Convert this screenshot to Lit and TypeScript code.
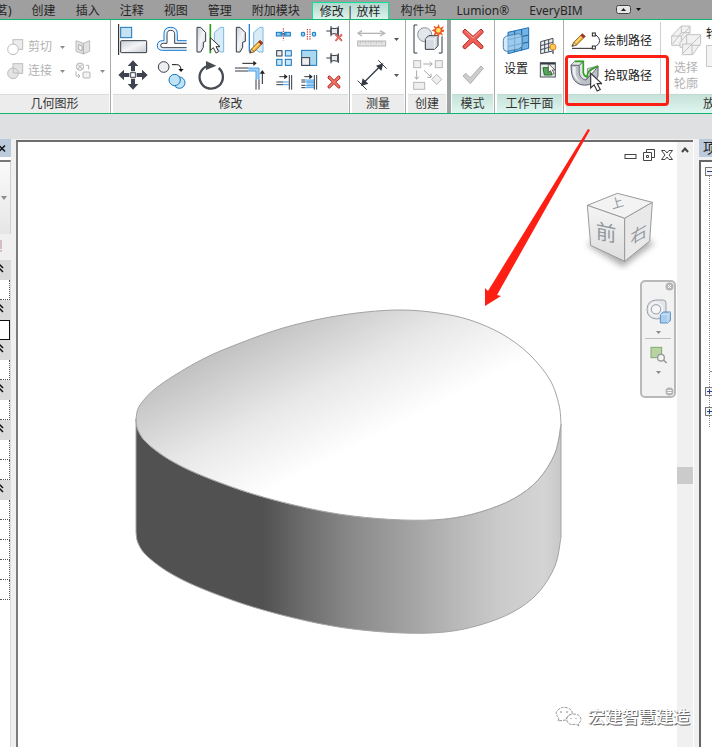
import { LitElement, html, svg, css, nothing, type TemplateResult, type SVGTemplateResult } from "lit";
import { customElement, property } from "lit/decorators.js";
import { classMap } from "lit/directives/class-map.js";

type Pt = [number, number];

/** Smooth curve through a list of points (Catmull-Rom converted to cubic Béziers). */
function curve(points: Pt[], closed = false): string {
  const n = points.length;
  const at = (i: number): Pt =>
    closed ? points[(i + n) % n] : points[Math.max(0, Math.min(n - 1, i))];
  let d = "";
  for (let i = 0; i < (closed ? n : n - 1); i++) {
    const [a, b, c, e] = [at(i - 1), at(i), at(i + 1), at(i + 2)];
    d += `C${b[0] + (c[0] - a[0]) / 6} ${b[1] + (c[1] - a[1]) / 6} ${c[0] - (e[0] - b[0]) / 6} ${c[1] - (e[1] - b[1]) / 6} ${c[0]} ${c[1]}`;
  }
  return d;
}

const RIM_BACK: Pt[] = [
  [136, 419], [140, 405], [160, 385], [203, 359], [243, 342], [283, 328], [325, 318], [366, 312],
  [403, 310], [438, 313], [470, 320], [502, 334], [529, 354], [550, 380], [559, 405], [561, 424],
];
const RIM_FRONT: Pt[] = [
  [561, 424], [555, 453], [538, 480], [513, 499], [480, 512], [445, 519], [403, 520], [353, 516],
  [307, 508], [253, 494], [203, 476], [170, 460], [147, 443], [138, 430], [136, 419],
];
const BASE_FRONT: Pt[] = RIM_FRONT.map(([x, y]) => [x, y + 113] as Pt);

const PENCIL = svg`<path d="M2 40L7 28L33 2L42 10L16 36Z" fill="#f5a623" stroke="#6b4a1c" stroke-width="2"/>
  <path d="M2 40L7 28L16 36Z" fill="#f7e3bd" stroke="#6b4a1c" stroke-width="2"/><path d="M2 40L5 34L8 37Z" fill="#222"/>
  <path d="M27 8L33 2L42 10L36 16Z" fill="#a2342a"/><path d="M12 30L31 11" stroke="#ffe08a" stroke-width="4"/>`;
const CURSOR = svg`<path d="M0 0V38L9 30L17 46L25 42L17 27H29Z" fill="#fff" stroke="#333" stroke-width="3"/>`;
const RED_X = svg`<path d="M6 10L10 6L24 20L38 6L42 10V14L29 25L42 38V41L38 44L24 30L10 44L6 41V38L19 25L6 13Z" fill="#f4796b" stroke="#b3201c" stroke-width="3"/>`;
const PIN = svg`<g fill="#e8eaed" stroke="#333a44" stroke-width="3"><path d="M4 27H17" /><path d="M18 12V43M18 18Q26 22 38 18V37Q26 33 18 37Z"/><path d="M40 13V42"/></g>`;

/** Glyph bodies: [viewBox width, viewBox height, shapes]; three units make one pixel. */
const GLYPHS: Record<string, [number, number, SVGTemplateResult]> = {
  align: [96, 96, svg`<path d="M5 3V96" stroke="#111" stroke-width="3"/><rect x="11" y="13" width="33" height="31" fill="#c5e3f0" stroke="#1476bd" stroke-width="3"/><rect x="11" y="53" width="78" height="36" rx="2" fill="url(#metal)" stroke="#333a44" stroke-width="3"/>`],
  offset: [96, 96, svg`<g fill="none" stroke-width="3"><path d="M92 53H64V32Q64 13 44 13Q24 13 24 32V53H20Q4 53 4 68Q4 82 20 82H92" fill="#eaf3fa" stroke="#1476cf"/><path d="M92 61H56V34Q56 22 44 22Q33 22 33 34V61H22Q14 61 14 68Q14 74 22 74H92" fill="#fff" stroke="#3a424d"/></g>`],
  mirrorPick: [96, 96, svg`<path d="M6 13H17L32 29V55L25 58V73L17 87H6Z" fill="url(#metal)" stroke="#333a44" stroke-width="3"/><path d="M86 13H76L58 29V55L64 60V73L76 87H86Z" fill="#d8ebf7" stroke="#7db8e0" stroke-width="3"/><path d="M46 3V91" stroke="#2f9e1b" stroke-width="5"/><g transform="translate(46 44)">${CURSOR}</g>`],
  mirrorDraw: [96, 96, svg`<path d="M7 13H18L34 29V55L26 58V73L18 87H7Z" fill="url(#metal)" stroke="#333a44" stroke-width="3"/><path d="M87 13H77L59 29V75L75 87H87Z" fill="#d8ebf7" stroke="#7db8e0" stroke-width="3"/><path d="M46 3V86" stroke="#2b83d6" stroke-width="4"/><g transform="translate(45 50)">${PENCIL}</g>`],
  move: [96, 96, svg`<path d="M48 4L64 21H54V37H42V21H32ZM48 92L64 75H54V59H42V75H32ZM4 48L21 32V42H37V54H21V64ZM92 48L75 32V42H59V54H75V64Z" fill="#3d444e"/><rect x="41" y="41" width="14" height="14" fill="#fff" stroke="#3d444e" stroke-width="3"/>`],
  copy: [96, 96, svg`<circle cx="23" cy="24" r="16" fill="#eceef0" stroke="#3a424d" stroke-width="3"/><path d="M48 17H62Q75 17 75 34" fill="none" stroke="#111" stroke-width="3"/><path d="M67 30H83L75 39Z" fill="#111"/><g fill="#bfe2f5" stroke="#1476bd" stroke-width="3"><circle cx="70" cy="71" r="17"/><circle cx="56" cy="63" r="17"/></g>`],
  rotate: [96, 96, svg`<path d="M71 27A35 35 0 1 1 37 21" fill="none" stroke="#474b52" stroke-width="7"/><path d="M33 6V33L64 20Z" fill="#474b52"/>`],
  trim: [96, 96, svg`<path d="M43 27H75V61H66V36H43Z" fill="#9fd0f7"/><g fill="none" stroke-width="3"><path d="M3 27H43M3 36H43M66 61V92M75 61V92" stroke="#333a44"/><path d="M43 27H75V61M43 36H66V61" stroke="#4aa0ea"/><path d="M25 13H60M85 75V42" stroke="#222"/></g><path d="M58 5L68 13L58 21ZM77 44L85 33L93 44Z" fill="#222"/>`],
  split: [54, 54, svg`<rect x="4" y="22" width="17" height="11" fill="#8ed0f5" stroke="#1476bd" stroke-width="3"/><rect x="29" y="22" width="17" height="11" fill="#8ed0f5" stroke="#1476bd" stroke-width="3"/><path d="M14 27H36" stroke="#1476bd" stroke-width="3"/><path d="M25 10V46" stroke="#b3201c" stroke-width="3" stroke-dasharray="4 3"/>`],
  splitGap: [54, 54, svg`<rect x="4" y="22" width="10" height="11" rx="2" fill="#8ed0f5" stroke="#1476bd" stroke-width="3"/><rect x="37" y="22" width="10" height="11" rx="2" fill="#8ed0f5" stroke="#1476bd" stroke-width="3"/><path d="M22 12V45M30 12V45" stroke="#b3201c" stroke-width="3" stroke-dasharray="4 3"/>`],
  unpin: [54, 54, svg`<g transform="translate(0 -9)">${PIN}</g><g transform="translate(28 24) scale(.55)">${RED_X}</g>`],
  pin: [54, 54, PIN],
  array: [54, 54, svg`<g fill="#eceef0" stroke="#333a44" stroke-width="3"><rect x="5" y="5" width="16" height="16"/></g><g fill="#c9e6f7" stroke="#1476bd" stroke-width="3"><rect x="31" y="5" width="18" height="16"/><rect x="5" y="31" width="16" height="18"/><rect x="31" y="31" width="18" height="18"/></g>`],
  scale: [54, 54, svg`<rect x="5" y="4" width="45" height="45" fill="#a9d9ee" stroke="#1476bd" stroke-width="3"/><rect x="5" y="26" width="24" height="23" fill="#eceef0" stroke="#333a44" stroke-width="3"/>`],
  trimOne: [54, 54, svg`<g stroke-width="3"><path d="M4 27H24M4 35H24M43 6V50M50 6V50M13 11H30" stroke="#333a44"/><path d="M24 27H42M24 35H42" stroke="#4aa0ea"/></g><path d="M28 3L38 11L28 19Z" fill="#222"/>`],
  trimMany: [54, 54, svg`<rect x="20" y="22" width="22" height="20" fill="#9fd2f7"/><g stroke-width="3"><path d="M4 21H16M4 27H16M4 37H16M4 44H16M43 6V50M50 6V50M13 11H30" stroke="#333a44"/><path d="M16 21H42M16 27H42M16 37H42M16 44H42" stroke="#4aa0ea"/></g><path d="M28 3L38 11L28 19Z" fill="#222"/>`],
  remove: [54, 54, svg`<g transform="translate(3 2)">${RED_X}</g>`],
  cut: [54, 54, svg`<g fill="#ececec" stroke="#bdbdbd" stroke-width="3"><rect x="21" y="5" width="29" height="29"/><circle cx="21" cy="34" r="16" fill="#fff"/></g>`],
  join: [54, 54, svg`<g fill="#e4e4e4" stroke="#bdbdbd" stroke-width="3"><rect x="21" y="5" width="29" height="29"/><circle cx="21" cy="34" r="16"/><path d="M22 20V33H36" fill="none"/></g>`],
  opening: [54, 54, svg`<path d="M6 8L28 16L47 8V40L28 48L6 40Z" fill="#e2e2e2" stroke="#bdbdbd" stroke-width="3"/><path d="M28 16V48M14 20L24 24V38L14 34Z" fill="#fff" stroke="#aaa" stroke-width="3"/>`],
  paint: [54, 54, svg`<g fill="#f2f2f2" stroke="#b5b5b5" stroke-width="3"><circle cx="18" cy="14" r="11"/><path d="M11 7L25 21M25 7L11 21"/><rect x="27" y="30" width="21" height="18" rx="3"/><path d="M6 28V42H18M12 36L18 42L12 48M36 10H44V22" fill="none"/></g>`],
  measure: [96, 54, svg`<g stroke="#b5b5b5" stroke-width="4" fill="none"><path d="M10 10H80"/><path d="M18 2L6 10L18 18M72 2L86 10L72 18"/></g><rect x="5" y="33" width="84" height="15" fill="#e4e4e4" stroke="#b5b5b5" stroke-width="3"/><path d="M13 33V41M21 33V38M29 33V41M37 33V38M45 33V41M53 33V38M61 33V41M69 33V38M77 33V41" stroke="#aaa" stroke-width="2"/>`],
  dimension: [96, 96, svg`<g stroke="#333a44" stroke-width="4"><path d="M17 77L77 17"/><path d="M5 65L32 92M67 4L92 29" stroke-width="3"/></g><path d="M15 81L20 58L37 74ZM82 13L60 20L76 36Z" fill="#333a44"/>`],
  create: [96, 96, svg`<path d="M16 6H6V90H16M80 90H90V40" fill="none" stroke="#333a44" stroke-width="3"/><circle cx="38" cy="35" r="21" fill="#e3e7ec" stroke="#8a929c" stroke-width="3"/><path d="M40 48L50 38H78V68L68 79H40Z" fill="#d6dbe1" stroke="#333a44" stroke-width="3"/><path d="M40 48H68V79M68 48L78 38" fill="none" stroke="#fff" stroke-width="2"/><path d="M80 3L84 15L96 9L90 20H96V26L88 28L94 38L83 33L80 44L75 33L64 38L69 27L58 22L69 18L64 8L75 13Z" fill="#ec5a24"/><circle cx="79" cy="22" r="7" fill="#ffe36b"/>`],
  similar: [96, 96, svg`<g fill="#efefef" stroke="#b8b8b8" stroke-width="3"><rect x="5" y="5" width="21" height="21"/><rect x="70" y="5" width="21" height="21"/><rect x="5" y="70" width="33" height="21"/><path d="M74 46L89 61L74 76L59 61Z"/></g><g stroke="#a8a8a8" stroke-width="3" fill="none"><path d="M34 15H60M53 8L61 15L53 22M14 34V60M8 53L14 61L21 53M36 34L57 54M57 44V55H46"/></g>`],
  cancel: [66, 66, svg`<path d="M3 9L9 3L33 25L57 3L63 9V14L43 34L63 54V59L57 63L33 42L9 63L3 59V54L23 34L3 14Z" fill="#ee5f57" stroke="#b63330" stroke-width="3"/><path d="M11 9L33 30L55 9" fill="none" stroke="#ff9d94" stroke-width="3"/>`],
  finish: [66, 66, svg`<path d="M3 36L11 28L25 41L57 6L64 13L25 59Z" fill="#cdcdcd" stroke="#b0b0b0" stroke-width="3"/>`],
  plane: [84, 84, svg`<path d="M18 16L80 2V64L18 80Z" fill="#72b4e6" stroke="#1b6fb5" stroke-width="3"/><path d="M38 12V75M59 7V70M18 38L80 24M18 59L80 45" stroke="#1f5f98" stroke-width="3"/><path d="M4 40Q4 30 14 27L50 20Q61 20 61 32V58L50 66L14 73Q4 72 4 62Z" fill="#b7dcf5" fill-opacity=".6" stroke="#4f83ad" stroke-width="3"/>`],
  showPlane: [54, 54, svg`<path d="M5 14L42 4V42L5 50Z" fill="#eceef0" stroke="#444b55" stroke-width="3"/><path d="M17 11V47M29 8V44M5 26L42 16M5 38L42 28" stroke="#444b55" stroke-width="3"/><circle cx="42" cy="30" r="9" fill="#ffc95e" stroke="#e08a12" stroke-width="3"/><path d="M42 39V50" stroke="#7a828c" stroke-width="6"/>`],
  viewer: [54, 54, svg`<rect x="4" y="5" width="45" height="43" fill="#e6eee6" stroke="#4a525c" stroke-width="3"/><path d="M4 8H49" stroke="#333a44" stroke-width="5"/><path d="M12 20H28V28H38V42H16Z" fill="#57a85c" stroke="#216b2b" stroke-width="3"/><g transform="translate(28 8) scale(.7)">${CURSOR}</g>`],
  sketch: [96, 54, svg`<path d="M6 49H66" stroke="#222" stroke-width="3"/><path d="M78 9Q100 26 78 43" fill="none" stroke="#333a44" stroke-width="3"/><g fill="#fff" stroke="#222" stroke-width="3"><rect x="67" y="3" width="9" height="9"/><rect x="67" y="42" width="9" height="9"/></g><g transform="translate(4 3)">${PENCIL}</g>`],
  pickPath: [96, 96, svg`<path d="M3 15L28 16V38Q32 58 48 60L74 32L84 18V48Q78 66 56 74Q30 80 14 62Q3 48 3 15Z" fill="#bcc2c8" stroke="#59616b" stroke-width="3"/><path d="M8 20H17V42Q22 62 38 68Q12 62 8 36Z" fill="#eef0f2"/><path d="M3 15L14 4H40L28 16ZM28 16L40 4V38Q43 50 52 50L48 60Q30 56 28 38ZM52 26L84 18L60 34V48L52 50Z" fill="#e3e6e9" stroke="#59616b" stroke-width="2"/><path d="M14 4H40V38Q42 50 52 50Q52 34 64 28L84 18" fill="none" stroke="#2fa31f" stroke-width="5"/><g transform="translate(62 40) scale(1.15)">${CURSOR}</g>`],
  profile: [96, 96, svg`<g fill="#f2f2f2" stroke="#c2c2c2" stroke-width="3"><path d="M5 36L34 6H60V26L36 50V64H5Z"/><path d="M5 36H34V64M34 36L60 8M34 6V26L8 60M34 26H60" fill="none"/><path d="M30 56L50 32H92V58L68 92H38V70H30Z"/><path d="M38 70V60H66V92M66 60L92 34M50 32V60M38 88L62 64H92" fill="none"/></g>`],
  wheel: [75, 75, svg`<path d="M30 3H52Q60 3 60 12V36Q54 60 32 60Q3 58 3 31Q4 5 30 3Z" fill="#e3e5e9" stroke="#9a9fa8" stroke-width="3"/><circle cx="30" cy="31" r="14" fill="#f6f6f6" stroke="#9a9fa8" stroke-width="3"/><circle cx="30" cy="31" r="20" fill="none" stroke="#fff" stroke-width="3"/><path d="M43 46L52 39H74V63L66 72H43Z" fill="#a9cdec" stroke="#5b8fc2" stroke-width="3"/><path d="M43 46H66V72M66 46L74 39" fill="none" stroke="#e6f2fb" stroke-width="2"/>`],
  zoomArea: [54, 54, svg`<rect x="6" y="4" width="32" height="31" fill="#b7d3a4" stroke="#83a96b" stroke-width="3"/><circle cx="36" cy="35" r="10" fill="#f4f4f4" stroke="#999" stroke-width="4"/><path d="M43 42L53 51" stroke="#999" stroke-width="5"/>`],
};

function glyph(name: string): TemplateResult {
  const [w, h, body] = GLYPHS[name];
  return html`<svg width=${w / 3} height=${h / 3} viewBox="0 0 ${w} ${h}" aria-hidden="true">
    <defs><linearGradient id="metal" x1="0" y1="0" x2="1" y2="1"><stop offset="0" stop-color="#c9ced4"/><stop offset=".5" stop-color="#f3f4f6"/><stop offset="1" stop-color="#c4c9cf"/></linearGradient></defs>${body}
  </svg>`;
}

const caret = html`<svg class="caret" width="5" height="3" viewBox="0 0 5 3" aria-hidden="true"><path d="M0 0H5L2.5 3Z" fill="currentColor"/></svg>`;

const reset = css`
  * { box-sizing: border-box; }
  svg { display: block; flex: none; }
  button { display: flex; align-items: center; margin: 0; padding: 0; border: 0; background: none; font: inherit; color: inherit; white-space: nowrap; }
`;

@customElement("tab-strip")
class TabStrip extends LitElement {
  static styles = [reset, css`
    :host { display: flex; height: 20px; overflow: hidden; background: #9f9f9f; border-bottom: 1px solid #12b56d; }
    .tab { flex: none; height: 19px; padding: 2px 10px 0; line-height: 16px; color: #262626; }
    .first { margin-left: -14px; }
    .active { height: 18px; margin: 2px 2px 0; padding: 0 7px; border: 1px solid #12e096; border-bottom: 0; background: linear-gradient(#b4d6ce, #dff5ef); }
    .fold { gap: 5px; padding: 0 10px; margin-left: 13px; color: #111; }
  `];
  private names = ["茗)", "创建", "插入", "注释", "视图", "管理", "附加模块", "修改 | 放样", "构件坞", "Lumion®", "EveryBIM"];
  render() {
    return html`${this.names.map((name, i) => html`<button class=${classMap({ tab: true, first: i === 0, active: i === 7 })}>${name}</button>`)}
      <button class="fold" aria-label="最小化面板">
        <svg width="15" height="9" viewBox="0 0 15 9"><rect x=".5" y=".5" width="14" height="8" rx="2" fill="#e8e8e8" stroke="#444"/><path d="M5 6H10L7.5 3Z" fill="#222"/></svg>${caret}
      </button>`;
  }
}

@customElement("ribbon-panel")
class RibbonPanel extends LitElement {
  @property() heading = "";
  @property({ type: Boolean, reflect: true }) contextual = false;
  static styles = css`
    :host { display: flex; flex: none; flex-direction: column; margin-left: 2px; border-right: 1px solid #a6adab; background: linear-gradient(#fff 70%, #f5f6f7); }
    .body { flex: 1; display: flex; min-height: 0; }
    .heading { height: 18px; margin: 0 1px 0 0; border-top: 1px solid #dcdcdc; background: #ececec; font-size: 12px; font-weight: 400; line-height: 18px; text-align: center; color: #333; }
    :host([contextual]) .heading { background: linear-gradient(#c7e2da, #def6ef); border-top-color: #bfdcd3; }
  `;
  render() {
    return html`<div class="body"><slot></slot></div><h2 class="heading">${this.heading}</h2>`;
  }
}

@customElement("tool-ribbon")
class ToolRibbon extends LitElement {
  static styles = [reset, css`
    :host { display: flex; height: 94px; overflow: hidden; background: #fff; border-bottom: 1px solid #12b56d; font-size: 12px; line-height: 16px; }
    .geometry { width: 111px; margin-left: 0; }
    .modify { width: 237px; }
    .gauge { width: 54px; }
    .make { width: 43px; border-right: 4px solid #9da5a3; }
    .mode { width: 43px; margin-left: 1px; }
    .work { width: 67px; }
    .sweep { flex: 1 0 300px; }
    .off { color: #b2b2b2; }
    .rows { display: grid; grid-template-columns: 68px 1fr; grid-auto-rows: 24px; padding: 15px 0 0 6px; }
    .rows button { gap: 4px; }
    .rows .caret { margin-left: 4px; color: #8c8c8c; }
    .large { display: grid; grid-template-columns: repeat(4, 32px); grid-auto-rows: 32px; gap: 4px 7px; padding: 3px 0 0 4px; }
    .small { display: grid; grid-template-columns: repeat(3, 18px); grid-auto-rows: 18px; gap: 6px 7px; padding: 5px 0 0 9px; }
    .stack { display: flex; flex-direction: column; gap: 4px; padding: 3px 0 0 4px; }
    .stack button { height: 32px; gap: 6px; }
    .stack .caret { color: #555; }
    .marks { display: flex; flex-direction: column; gap: 14px; padding: 8px 0 0 10px; }
    .set { flex-direction: column; align-self: flex-start; gap: 6px; padding: 7px 0 0 5px; }
    .pair { display: flex; flex-direction: column; gap: 6px; padding: 17px 0 0 9px; }
    .paths { display: flex; flex-direction: column; padding: 3px 8px 0 4px; }
    .paths button { height: 36px; gap: 2px; }
    .side { display: flex; margin-top: 2px; height: 72px; border-left: 1px solid #ccd0cf; }
    .choose { flex-direction: column; align-self: flex-start; margin: 2px 0 0 9px; line-height: 16px; }
    .choose svg { margin-bottom: 4px; }
    .field { display: flex; flex-direction: column; gap: 3px; margin: 4px 0 0 4px; color: #222; }
    .field select { width: 120px; height: 22px; border: 1px solid #c8c8c8; background: #f4f4f4; }
  `];
  private icons(names: string[]) {
    return names.map((n) => html`<button aria-label=${n}>${glyph(n)}</button>`);
  }
  render() {
    return html`
      <ribbon-panel class="geometry" heading="几何图形">
        <div class="rows off">
          <button>${glyph("cut")}剪切${caret}</button><button aria-label="洞口">${glyph("opening")}</button>
          <button>${glyph("join")}连接${caret}</button><button aria-label="填色">${glyph("paint")}${caret}</button>
        </div>
      </ribbon-panel>
      <ribbon-panel class="modify" heading="修改">
        <div class="large">${this.icons(["align", "offset", "mirrorPick", "mirrorDraw", "move", "copy", "rotate", "trim"])}</div>
        <div class="small">${this.icons(["split", "splitGap", "unpin", "array", "scale", "pin", "trimOne", "trimMany", "remove"])}</div>
      </ribbon-panel>
      <ribbon-panel class="gauge" heading="测量">
        <div class="stack">
          <button aria-label="测量">${glyph("measure")}${caret}</button>
          <button aria-label="尺寸标注">${glyph("dimension")}${caret}</button>
        </div>
      </ribbon-panel>
      <ribbon-panel class="make" heading="创建"><div class="stack">${this.icons(["create", "similar"])}</div></ribbon-panel>
      <ribbon-panel class="mode" heading="模式" contextual><div class="marks">${this.icons(["cancel", "finish"])}</div></ribbon-panel>
      <ribbon-panel class="work" heading="工作平面" contextual>
        <button class="set">${glyph("plane")}设置</button>
        <div class="pair">${this.icons(["showPlane", "viewer"])}</div>
      </ribbon-panel>
      <ribbon-panel class="sweep" heading="放样" contextual>
        <div class="paths"><button>${glyph("sketch")}绘制路径</button><button>${glyph("pickPath")}拾取路径</button></div>
        <div class="side">
          <button class="choose off">${glyph("profile")}<span>选择</span><span>轮廓</span></button>
          <label class="field">轮廓:<select><option></option></select></label>
        </div>
      </ribbon-panel>`;
  }
}

@customElement("property-palette")
class PropertyPalette extends LitElement {
  static styles = [reset, css`
    :host { display: flex; flex-direction: column; width: 12px; overflow: hidden; background: #fff; border-right: 1px solid #f0f0f0; }
    .title { height: 18px; background: #bccbdb; }
    .type { height: 74px; margin-top: 3px; border-top: 2px solid #777; border-right: 1px solid #d0d0d0; background: linear-gradient(#fafafa, #e6e6e6); color: #8d8d8d; }
    .edit { height: 26px; color: #b98c96; background: #f0f0f0; }
    .body { flex: 1; border-right: 1px solid #dcdcdc; }
    .group { width: 100%; height: 20px; padding-bottom: 4px; background: #dadada; }
    input { display: block; width: 10px; height: 20px; padding: 0; border: 0; border-right: 1px dotted #555; border-bottom: 1px dotted #555; border-radius: 0; background: #fff; outline: none; }
    .current { border: 1px solid #111; border-left: 0; }
  `];
  private groups = [1, 1, 1, 1, 2, 5];
  render() {
    return html`
      <button class="title" aria-label="关闭"><svg width="6" height="9" viewBox="0 0 6 9"><path d="M-1 1.5L5 7.5M5 1.5L-1 7.5" stroke="#111" stroke-width="1.5"/></svg></button>
      <button class="type" aria-label="类型"><svg width="8" height="4" viewBox="0 0 8 4"><path d="M1 0H7L4 4Z" fill="currentColor"/></svg></button>
      <div class="edit"><svg width="3" height="20" viewBox="0 0 3 20"><path d="M1 6V15M0 17H2" stroke="currentColor"/></svg></div>
      <div class="body">${this.groups.map((cells, g) => html`
        <button class="group" aria-label="展开分组"><svg width="4" height="10" viewBox="0 0 4 10"><path d="M-1 1L3 5M-1 5L3 9" fill="none" stroke="#111" stroke-width="1.5"/></svg></button>
        ${Array.from({ length: cells }, () => html`<input class=${g === 1 ? "current" : nothing} aria-label="参数值">`)}`)}
      </div>`;
  }
}

@customElement("project-browser")
class ProjectBrowser extends LitElement {
  static styles = [reset, css`
    :host { display: flex; flex-direction: column; width: 13px; overflow: hidden; background: #f0f0f0; }
    .title { height: 18px; margin: 0; padding-left: 4px; background: #bccbdb; font-size: 14px; font-weight: 400; line-height: 17px; white-space: nowrap; color: #222; }
    .tree { flex: 1; margin-top: 3px; padding: 5px 0 0 4px; border: 2px solid #666; border-right: 0; border-bottom: 0; background: #fff; }
    .node { width: 9px; height: 9px; border: 1px solid #777; background: #f4f4f4; }
    .branch { width: 5px; height: 211px; margin-left: 4px; border-left: 1px dotted #888; background: linear-gradient(#888, #888) 0 195px / 5px 1px no-repeat; }
    .short { height: 11px; background: none; }
  `];
  private node(open: boolean) {
    return html`<button class="node" aria-label=${open ? "折叠" : "展开"}><svg width="7" height="7" viewBox="0 0 7 7"><path d=${open ? "M1 3.5H6" : "M1 3.5H6M3.5 1V6"} stroke="#27408b"/></svg></button>`;
  }
  render() {
    return html`<h2 class="title">项目浏览器</h2>
      <div class="tree">${this.node(true)}<div class="branch"></div>${this.node(false)}<div class="branch short"></div>${this.node(false)}<div class="branch short"></div></div>`;
  }
}

@customElement("model-view")
class ModelView extends LitElement {
  static styles = [reset, css`
    :host { position: relative; display: flex; flex: 1; border: 2px solid #6d6d6d; border-left-color: #7d7d7d; border-right: 0; border-bottom: 0; background: #fff; }
    .scene { position: absolute; inset: 0; width: 100%; height: 100%; overflow: visible; z-index: 2; pointer-events: none; }
    .space { flex: 1; display: flex; flex-direction: column; align-items: flex-end; }
    .windows { display: flex; gap: 6px; padding: 7px 4px 0 0; }
    .cube { margin: 26px 16px 0 0; }
    .nav { display: flex; flex-direction: column; align-items: center; width: 36px; height: 118px; margin: 9px 1px 0 0; border: 2px solid #b9b9b9; border-radius: 5px; background: #f2f2f2; color: #888; }
    .nav .dot { align-self: flex-end; }
    .nav .wheel { margin-top: 8px; }
    .nav .caret { margin-top: 7px; }
    .rule { width: 26px; height: 1px; margin: 4px 0 7px; background: #bdbdbd; }
    .grow { flex: 1; }
    .scroll { width: 16px; display: flex; flex-direction: column; align-items: center; background: #f0f0f0; }
    .up { height: 16px; }
    .thumb { width: 16px; height: 17px; margin-top: 309px; background: #cbcbcb; }
  `];
  private dot(d: string) {
    return html`<button class="dot" aria-label="选项"><svg width="9" height="9" viewBox="0 0 9 9"><circle cx="4.5" cy="4.5" r="4" fill="#b5b5b5"/><path d=${d} fill="none" stroke="#fff"/></svg></button>`;
  }
  render() {
    const rim = `M136 419${curve(RIM_BACK)}${curve(RIM_FRONT)}Z`;
    const side = `M561 424${curve(RIM_FRONT)}V532${curve([...BASE_FRONT].reverse())}Z`;
    return html`
      <div class="space">
        <div class="windows">
          <button aria-label="最小化"><svg width="13" height="12" viewBox="0 0 13 12"><rect x="1" y="5.5" width="11" height="4" fill="#fff" stroke="#444"/></svg></button>
          <button aria-label="还原"><svg width="12" height="12" viewBox="0 0 12 12"><path d="M3.5 3V.5H11.5V8.5H9" fill="#fff" stroke="#444"/><path d="M.5 3.5H8.5V11.5H.5ZM3.5 6.5H5.5V8.5H3.5Z" fill="#fff" stroke="#444"/></svg></button>
          <button aria-label="关闭"><svg width="12" height="12" viewBox="0 0 12 12"><path d="M.5 1.5H4L6 4L8 1.5H11.5L8 6L11.5 10.5H8L6 8L4 10.5H.5L4 6Z" fill="#fff" stroke="#444"/></svg></button>
        </div>
        <svg class="cube" width="78" height="84" viewBox="0 0 234 252" role="img" aria-label="视图立方体">
          <defs><filter id="soft" x="-30%" y="-60%" width="160%" height="220%"><feGaussianBlur stdDeviation="10"/></filter>
          <linearGradient id="face" x1="0" y1="0" x2="0" y2="1"><stop offset="0" stop-color="#f4f4f4"/><stop offset="1" stop-color="#dedede"/></linearGradient></defs>
          <path d="M10 172L120 240L215 168L125 130Z" fill="#999" opacity=".8" filter="url(#soft)"/>
          <g stroke="#9a9a9a" stroke-width="3" stroke-linejoin="round"><path d="M13 55L103 19L208 46L125 94Z" fill="#f3f3f3"/><path d="M13 55L125 94V223L23 175Z" fill="url(#face)"/><path d="M125 94L208 46L200 162L125 223Z" fill="#e9e9e9"/></g>
          <g font-family="'Noto Sans CJK SC', sans-serif" fill="#9298a0"><text x="38" y="153" font-size="62" transform="skewY(12)" transform-origin="38 153">前</text><text x="142" y="174" font-size="50" transform="skewY(-30)" transform-origin="142 174">右</text><text x="88" y="66" font-size="38" transform="rotate(-16)" transform-origin="88 66">上</text></g>
        </svg>
        <div class="nav">
          ${this.dot("M3 3L6 6M6 3L3 6")}
          <button class="wheel" aria-label="导航控制盘">${glyph("wheel")}</button>${caret}
          <div class="rule"></div>
          <button aria-label="区域放大">${glyph("zoomArea")}</button>${caret}
          <div class="grow"></div>
          ${this.dot("M2.5 3.5H6.5M2.5 5.5H6.5")}
        </div>
      </div>
      <div class="scroll"><button class="up" aria-label="向上滚动"><svg width="8" height="6" viewBox="0 0 8 6"><path d="M1 5L4 1.5L7 5" fill="none" stroke="#444" stroke-width="2"/></svg></button><div class="thumb"></div></div>
      <svg class="scene" viewBox="18 142 675 605" role="img" aria-label="放样模型">
        <defs>
          <linearGradient id="top" gradientUnits="userSpaceOnUse" x1="190" y1="360" x2="260" y2="496"><stop offset="0" stop-color="#bfbfbf"/><stop offset=".55" stop-color="#e8e8e8"/><stop offset="1" stop-color="#fff"/></linearGradient>
          <linearGradient id="side" gradientUnits="userSpaceOnUse" x1="136" y1="0" x2="561" y2="0"><stop offset="0" stop-color="#515151"/><stop offset=".3" stop-color="#515151"/><stop offset=".4" stop-color="#6e6e6e"/><stop offset=".51" stop-color="#8a8a8a"/><stop offset=".63" stop-color="#a0a0a0"/><stop offset=".75" stop-color="#b8b8b8"/><stop offset=".86" stop-color="#cbcbcb"/><stop offset=".96" stop-color="#d4d4d4"/><stop offset="1" stop-color="#c8c8c8"/></linearGradient>
        </defs>
        <path d=${side} fill="url(#side)" stroke="#a3a3a3"/>
        <path d=${rim} fill="url(#top)" stroke="#a3a3a3"/>
        <path d="M588 129L590 130L497 295L501 296L485 306V288L488 291Z" fill="#fd1f14"/>
      </svg>`;
  }
}

@customElement("app-root")
class AppRoot extends LitElement {
  static styles = [reset, css`
    :host { position: relative; display: flex; flex-direction: column; min-height: 100vh; overflow: hidden; background: #dfe0e2; font: 12px/16px "Noto Sans", "Noto Sans CJK SC", sans-serif; color: #222; }
    .options { height: 25px; background: #dfe0e2; }
    .work { flex: 1; display: flex; min-height: 608px; background: #f0f0f0; }
    .view { margin: 1px 6px 0 4px; box-shadow: 1px 0 #fff; }
    .frame { position: absolute; left: 565px; top: 55px; width: 104px; height: 51px; border: 3px solid #fd1f14; border-radius: 4px; }
    .mark { position: absolute; right: 22px; bottom: 18px; z-index: 3; display: flex; align-items: center; gap: 6px; font-size: 17px; font-weight: 500; line-height: 25px; color: #fff; text-shadow: 1px 1px #666, 0 1px #aaa; }
  `];
  render() {
    return html`
      <tab-strip></tab-strip>
      <tool-ribbon></tool-ribbon>
      <div class="options"></div>
      <div class="work">
        <property-palette></property-palette>
        <model-view class="view"></model-view>
        <project-browser></project-browser>
      </div>
      <div class="frame"></div>
      <div class="mark">
        <svg width="27" height="22" viewBox="0 0 27 22"><g fill="#fff" stroke="#999" stroke-dasharray="3 1"><path d="M3 15L4 12Q-1 8 3 4Q7 0 13 2Q18 4 17 8Q12 9 11 14Z"/><path d="M24 20L21 18Q14 20 12 15Q11 9 18 8Q25 8 26 13Q26 16 23 18Z"/></g><path d="M6 5V7M12 5V7M16 12V13M21 12V13" stroke="#888"/></svg>宏建智慧建造
      </div>`;
  }
}
